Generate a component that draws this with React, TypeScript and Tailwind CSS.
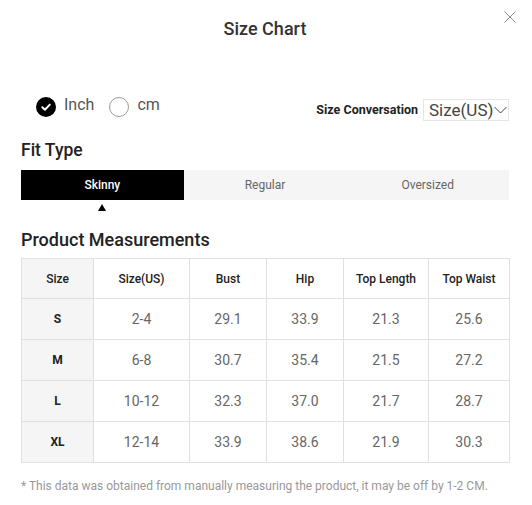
const sizes = [
  { size: "S", us: "2-4", bust: "29.1", hip: "33.9", len: "21.3", waist: "25.6" },
  { size: "M", us: "6-8", bust: "30.7", hip: "35.4", len: "21.5", waist: "27.2" },
  { size: "L", us: "10-12", bust: "32.3", hip: "37.0", len: "21.7", waist: "28.7" },
  { size: "XL", us: "12-14", bust: "33.9", hip: "38.6", len: "21.9", waist: "30.3" },
];

const fitTypes = ["Skinny", "Regular", "Oversized"];

export default function App() {
  return (
    <div className="relative w-[532px] h-[505px] bg-white pl-[21px] pr-[23px] font-['Roboto',sans-serif]">
      <button className="absolute top-[11px] right-[16px] w-[12px] h-[12px]" aria-label="close">
        <svg width="12" height="12" viewBox="0 0 12 12">
          <path d="M0.5 0.5 L11.5 11.5 M11.5 0.5 L0.5 11.5" stroke="#8a8a8a" strokeWidth="1" fill="none" />
        </svg>
      </button>

      <h1 className="pt-[17px] text-center text-[18px] leading-[24px] font-medium text-[#333]">Size Chart</h1>

      <div className="mt-[56px] flex items-start justify-between">
        <div className="flex h-[20px] items-center pl-[15px]">
          <span className="flex h-[20px] w-[20px] items-center justify-center rounded-full bg-black">
            <svg width="12" height="12" viewBox="0 0 12 12">
              <path d="M2.3 6.2 L4.9 8.7 L9.8 3.6" stroke="#fff" strokeWidth="2" fill="none" strokeLinecap="round" strokeLinejoin="round" />
            </svg>
          </span>
          <span className="ml-[8px] -mt-[5px] text-[16px] leading-[20px] text-[#555]">Inch</span>
          <span className="ml-[15px] h-[20px] w-[20px] rounded-full border border-[#999]" />
          <span className="ml-[8px] -mt-[5px] text-[16px] leading-[20px] text-[#555]">cm</span>
        </div>
        <div className="flex h-[24px] items-center pt-[2px]">
          <span className="text-[12.5px] font-bold text-[#222]">Size Conversation</span>
          <div className="ml-[5px] flex h-[22px] w-[86px] items-center border border-[#e6e6e6] pl-[5px]">
            <span className="text-[17px] leading-[20px] text-[#444]">Size(US)</span>
            <svg className="ml-[1px]" width="13" height="8" viewBox="0 0 13 8">
              <path d="M0.5 1 L6.5 7 L12.5 1" stroke="#444" strokeWidth="1" fill="none" />
            </svg>
          </div>
        </div>
      </div>

      <h2 className="mt-[17px] text-[17.5px] leading-[24px] font-medium text-[#222]">Fit Type</h2>
      <div className="mt-[8px] grid h-[30px] grid-cols-3 bg-[#f5f5f5]">
        {fitTypes.map((t, i) => (
          <div
            key={t}
            className={
              i === 0
                ? "flex items-center justify-center bg-black text-[12px] font-medium text-white"
                : "flex items-center justify-center text-[12px] text-[#666]"
            }
          >
            {t}
          </div>
        ))}
      </div>
      <div className="grid grid-cols-3">
        <div className="flex justify-center pt-[4px]">
          <div className="h-0 w-0 border-x-[4px] border-b-[7px] border-x-transparent border-b-black" />
        </div>
      </div>

      <h2 className="mt-[17px] text-[18px] leading-[24px] font-medium text-[#222]">Product Measurements</h2>

      <table className="mt-[6px] w-full table-fixed border-collapse text-center">
        <colgroup>
          <col className="w-[72px]" />
          <col className="w-[96px]" />
          <col className="w-[77px]" />
          <col className="w-[77px]" />
          <col className="w-[85px]" />
          <col className="w-[81px]" />
        </colgroup>
        <thead>
          <tr className="h-[40px] text-[12px] text-[#222]">
            <th className="border border-[#e0e0e0] bg-[#f5f5f5] font-medium">Size</th>
            <th className="border border-[#e0e0e0] font-medium">Size(US)</th>
            <th className="border border-[#e0e0e0] font-medium">Bust</th>
            <th className="border border-[#e0e0e0] font-medium">Hip</th>
            <th className="border border-[#e0e0e0] font-medium">Top Length</th>
            <th className="border border-[#e0e0e0] font-medium">Top Waist</th>
          </tr>
        </thead>
        <tbody>
          {sizes.map((r) => (
            <tr key={r.size} className="h-[41px] text-[14px] text-[#666]">
              <td className="border border-[#e0e0e0] bg-[#f5f5f5] text-[12px] font-bold text-[#222]">{r.size}</td>
              <td className="border border-[#e0e0e0]">{r.us}</td>
              <td className="border border-[#e0e0e0]">{r.bust}</td>
              <td className="border border-[#e0e0e0]">{r.hip}</td>
              <td className="border border-[#e0e0e0]">{r.len}</td>
              <td className="border border-[#e0e0e0]">{r.waist}</td>
            </tr>
          ))}
        </tbody>
      </table>

      <p className="mt-[15px] text-[12px] leading-[16px] text-[#999]">
        * This data was obtained from manually measuring the product, it may be off by 1-2 CM.
      </p>
    </div>
  );
}
